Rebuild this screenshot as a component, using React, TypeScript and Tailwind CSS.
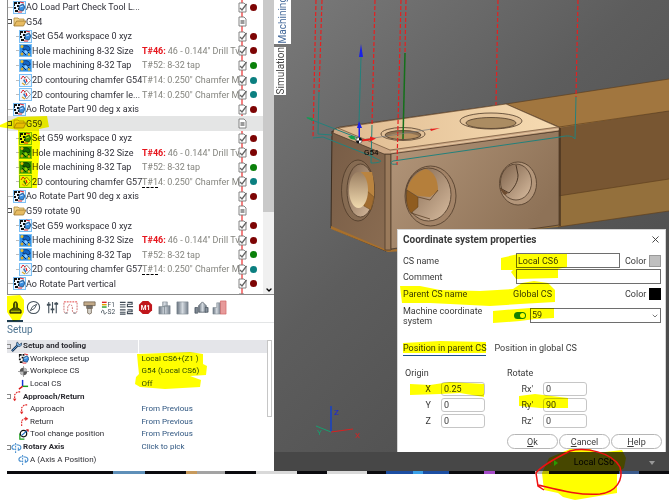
import React, { useState } from 'react';
import { ChevronDown, X } from 'lucide-react';

type IconKind = 'folder' | 'setup' | 'hole' | 'contour';

interface TreeItem {
  kind: IconKind;
  name: string;
  level: 1 | 2;
  dot?: string;
  tool?: string;
  toolText?: string;
  changed?: boolean;
  selected?: boolean;
}

const MAROON = 'bg-[#7d0404]';
const GREEN = 'bg-[#0a800a]';
const TEAL = 'bg-[#0b7f80]';

const TREE: TreeItem[] = [
  { kind: 'setup', name: 'AO Load Part Check Tool L...', level: 1, dot: MAROON },
  { kind: 'folder', name: 'G54', level: 1 },
  { kind: 'setup', name: 'Set G54 workspace 0 xyz', level: 2, dot: MAROON },
  { kind: 'hole', name: 'Hole machining 8-32 Size', level: 2, dot: MAROON, tool: 'T#46:', toolText: '46 - 0.144" Drill Tv' },
  { kind: 'hole', name: 'Hole machining 8-32 Tap', level: 2, dot: GREEN, tool: 'T#52:', toolText: '8-32 tap' },
  { kind: 'contour', name: '2D contouring chamfer G54', level: 2, dot: TEAL, tool: 'T#14:', toolText: '0.250" Chamfer M' },
  { kind: 'contour', name: '2D contouring chamfer le...', level: 2, dot: TEAL, tool: 'T#14:', toolText: '0.250" Chamfer M' },
  { kind: 'setup', name: 'Ao Rotate Part 90 deg x axis', level: 1, dot: MAROON },
  { kind: 'folder', name: 'G59', level: 1, selected: true },
  { kind: 'setup', name: 'Set G59 workspace 0 xyz', level: 2, dot: MAROON },
  { kind: 'hole', name: 'Hole machining 8-32 Size', level: 2, dot: MAROON, tool: 'T#46:', toolText: '46 - 0.144" Drill Tv' },
  { kind: 'hole', name: 'Hole machining 8-32 Tap', level: 2, dot: GREEN, tool: 'T#52:', toolText: '8-32 tap' },
  { kind: 'contour', name: '2D contouring chamfer G57', level: 2, dot: TEAL, tool: 'T#14:', toolText: '0.250" Chamfer M', changed: true },
  { kind: 'setup', name: 'Ao Rotate Part 90 deg x axis', level: 1, dot: MAROON },
  { kind: 'folder', name: 'G59 rotate 90', level: 1 },
  { kind: 'setup', name: 'Set G59 workspace 0 xyz', level: 2, dot: MAROON },
  { kind: 'hole', name: 'Hole machining 8-32 Size', level: 2, dot: MAROON, tool: 'T#46:', toolText: '46 - 0.144" Drill Tv' },
  { kind: 'hole', name: 'Hole machining 8-32 Tap', level: 2, dot: GREEN, tool: 'T#52:', toolText: '8-32 tap' },
  { kind: 'contour', name: '2D contouring chamfer G57', level: 2, dot: TEAL, tool: 'T#14:', toolText: '0.250" Chamfer M', changed: true },
  { kind: 'setup', name: 'Ao Rotate Part vertical', level: 1, dot: MAROON },
];

// Checkered part with a blue block, used for workpiece setup
const SetupGlyph = () => (
  <g>
    <path d="M1 1h3v2H2v2H1zM5 1h2v2H5zM1 6h2v2H1zM4 4h2v2H4zM2 9h3v2H2zM5 7h2v2H5z" fill="#111" />
    <path d="M7 1l4 1M5 11l4 0" stroke="#e3202a" strokeWidth="1" />
    <path d="M6 5l4-2 2 3-2 4-4-1z" fill="#3a8ee0" stroke="#123a66" strokeWidth=".7" />
    <path d="M7 6l3-1" stroke="#bfe2ff" strokeWidth="1" />
  </g>
);

const TreeIcon = ({ kind }: { kind: IconKind }) => {
  if (kind === 'folder') {
    return (
      <svg viewBox="0 0 13 13" className="h-[13px] w-[13px] shrink-0">
        <path d="M1 11V3h4l1 1h5v2" fill="#f3d58a" stroke="#b08a3c" strokeWidth=".8" />
        <path d="M1 11l2.500-5H13l-2.500 5z" fill="#e8bc62" stroke="#a07a30" strokeWidth=".8" />
      </svg>
    );
  }
  return (
    <svg viewBox="0 0 13 13" className="h-[13px] w-[13px] shrink-0">
      <rect x=".5" y=".5" width="12" height="12" fill={kind === 'hole' ? '#2f8fe8' : '#eaf5ff'} stroke="#7cc0f5" />
      {kind === 'setup' && <SetupGlyph />}
      {kind === 'hole' && (
        <g>
          <path d="M4 2c4-1 7 0 7 4l-3 1-1-2-3 1z" fill="#1266c8" stroke="#0a2d66" strokeWidth=".8" />
          <path d="M3 7l4 4M7 6l4 4" stroke="#0a2d66" strokeWidth="1" />
          <path d="M5 8l2-2 2 2-2 2z" fill="#8fd0ff" />
          <circle cx="3" cy="2.500" r="1.500" fill="#e8bd30" />
          <circle cx="3" cy="10" r="1.500" fill="#d2a92c" />
          <circle cx="10" cy="10.500" r="1.300" fill="#e8bd30" />
        </g>
      )}
      {kind === 'contour' && (
        <g fill="none">
          <path d="M7.500 2l4 4.500-4 4.500-3-4.500z" fill="#fff" stroke="#888" strokeWidth=".9" />
          <path d="M2 5l2-3 2 2" stroke="#e3202a" strokeWidth="1" />
          <path d="M5 6l2 3" stroke="#1266c8" strokeWidth="1.200" />
          <path d="M7 5l1 3" stroke="#e3202a" strokeWidth="1.200" />
          <path d="M3 9l3 2" stroke="#e0a21c" strokeWidth="1.200" />
        </g>
      )}
    </svg>
  );
};

const StatusIcon = ({ checked }: { checked: boolean }) => (
  <svg viewBox="0 0 9 11" className="h-[11px] w-[9px] shrink-0">
    <path d="M1 1h5l2 2v7H1z" fill="#fff" stroke="#777" strokeWidth=".9" />
    {checked ? <path d="M2 6l2 2 4.500-6" fill="none" stroke="#666" strokeWidth="1.300" /> : <path d="M2.500 4h4v4h-4z" fill="#999" />}
  </svg>
);

const TreeRow = ({ item }: { item: TreeItem }) => (
  <div className={`flex min-h-0 min-w-0 items-center ${item.selected ? 'bg-[#e4e5e5]' : ''}`}>
    <div className="flex w-[134px] shrink-0 items-center">
      {item.kind === 'folder' ? (
        <button aria-label="Toggle group" className="mr-px h-[5px] w-1 border border-l-0 border-[#555]" />
      ) : (
        <span className={`h-px shrink-0 bg-[#bdbdbd] ${item.level === 2 ? 'ml-2 w-[3px]' : 'w-[5px]'}`} />
      )}
      <TreeIcon kind={item.kind} />
      <span className="whitespace-nowrap text-[#303038]">{item.name}</span>
    </div>
    <div className="flex min-w-0 flex-1 gap-[2px] whitespace-nowrap text-[#85857f]">
      {item.tool && (
        <>
          <span className={item.tool === 'T#46:' ? 'font-bold text-[#e6141c]' : ''}>
            {item.changed ? <span className="border-b border-dashed border-black">T#1</span> : null}
            {item.changed ? '4:' : item.tool}
          </span>
          <span>{item.toolText}</span>
        </>
      )}
    </div>
    <div className="flex w-[25px] shrink-0 items-center gap-[3px]">
      <StatusIcon checked={item.kind !== 'folder'} />
      {item.dot && <span className={`h-[7px] w-[7px] rounded-full ${item.dot}`} />}
    </div>
  </div>
);

const OperationTree = () => (
  <div className="flex h-[295px] overflow-hidden border-b border-l border-[#8b8b8b] bg-white">
    <div className="relative min-w-0 flex-1">
      <div className="absolute bottom-0 right-[20px] top-0 w-[2px] bg-[#f58080]" />
      <div className="relative grid h-[291px] grid-cols-1 grid-rows-[repeat(20,minmax(0,1fr))] text-[9px] leading-[14px]">
        {TREE.map((item, i) => (
          <TreeRow key={i} item={item} />
        ))}
      </div>
      <div className="relative text-[9px] leading-[14px]">
        <TreeRow item={{ kind: 'folder', name: 'G54 part off', level: 1 }} />
      </div>
    </div>
    <div className="flex w-[11px] flex-col items-center bg-[#f0f0f0]">
      <div className="h-[212px] w-full bg-[#c9c9c9]" />
      <ChevronDown className="mt-auto h-2 w-2 text-black" strokeWidth={4} />
    </div>
  </div>
);

const TOOLS: { label: string; art: React.ReactNode }[] = [
  {
    label: 'Setup',
    art: (
      <g>
        <path d="M6 8V4l1-2h2l1 2v4l4 3v3H2v-3z" fill="#4a5560" stroke="#111" strokeWidth=".8" />
        <path d="M8 3v5M3 12h10" stroke="#c9d2da" strokeWidth="1.200" />
      </g>
    ),
  },
  {
    label: 'Parameters',
    art: (
      <g fill="none" stroke="#44505a">
        <circle cx="8" cy="8" r="6.500" strokeWidth="1.100" />
        <path d="M11.500 4.500L9 9l-4.500 2.500L7 7z" />
      </g>
    ),
  },
  {
    label: 'Levels',
    art: (
      <g stroke="#44505a" strokeWidth="1.200">
        <path d="M4 2v12M8 2v12M12 2v12" />
        <path d="M2 5h4M6 10h4M10 4h4" strokeWidth="2" />
      </g>
    ),
  },
  {
    label: 'Strategy',
    art: (
      <g fill="none">
        <path d="M1 2h14" stroke="#e23a3a" strokeDasharray="2 1" />
        <path d="M1 3v8c0 4 4 4 4 0V8c0-4 5-4 5 0v3c0 4 5 4 5 0V3" stroke="#c66" strokeDasharray="2 1" />
        <path d="M2 14h3M11 14h3" stroke="#7b8790" />
      </g>
    ),
  },
  {
    label: 'Tool',
    art: (
      <g stroke="#6b5d4c" strokeWidth=".8">
        <path d="M2 2h12v4H2z" fill="#c2a987" />
        <path d="M5 6h6v3H5z" fill="#777" />
        <path d="M6 9h4v5l-2 1-2-1z" fill="#d8d4cc" />
      </g>
    ),
  },
  {
    label: 'Feeds',
    art: (
      <g fontFamily="Roboto, sans-serif" fontSize="7" fill="#44505a">
        <path d="M1 2.500h5" stroke="#d22" strokeWidth="1.500" />
        <path d="M1 5h5" stroke="#e2a400" strokeWidth="1.500" />
        <path d="M1 7.500h5" stroke="#2a9a2a" strokeWidth="1.500" />
        <path d="M0 14c1-4 3-4 3-1s2 2 3 0" fill="none" stroke="#44505a" />
        <text x="7" y="7">F1</text>
        <text x="7" y="15">S2</text>
      </g>
    ),
  },
  {
    label: 'Lists',
    art: (
      <g stroke="#3f4a55" strokeWidth="1.200" fill="none">
        <path d="M1 2.500h6M1 5h6M1 7.500h6M1 10.500h6M1 13h6M1 15h6" />
        <path d="M9 2.500h5v2H9v2.500h6M9 10.500h5v2H9v2h6" />
      </g>
    ),
  },
  {
    label: 'Stops',
    art: (
      <g>
        <path d="M5 1h6l4 4v6l-4 4H5l-4-4V5z" fill="#c0161c" />
        <text x="8" y="10.500" textAnchor="middle" fontFamily="Roboto, sans-serif" fontWeight="700" fontSize="7" fill="#fff">
          M1
        </text>
      </g>
    ),
  },
  {
    label: 'Stock',
    art: (
      <g fill="url(#metal)" stroke="#7d8791" strokeWidth=".6">
        <path d="M6 2h5v5H6zM2 7h6v8H2zM8 6h6v9H8z" />
      </g>
    ),
  },
  { label: 'Part', art: <path d="M2 2h12v13H2z" fill="url(#metal)" stroke="#7d8791" strokeWidth=".6" /> },
  {
    label: 'Fixture',
    art: (
      <g fill="url(#metal)" stroke="#4c5762" strokeWidth=".8">
        <path d="M5 6l4-4 4 4v7H5z" />
        <path d="M1 8h3v6H1zM12 8h3v5h-3z" />
      </g>
    ),
  },
  {
    label: 'Result',
    art: (
      <g strokeWidth=".6">
        <path d="M1 8h4V3h4v12H1z" fill="url(#metal)" stroke="#7d8791" />
        <path d="M9 1h6v14H9z" fill="#e79a9a" stroke="#c55" />
      </g>
    ),
  },
];

const Toolbar = () => {
  const [active, setActive] = useState('Setup');
  return (
    <div className="flex h-[28px] items-center justify-between border-b border-[#e3e5e6] pr-[46px]">
      {TOOLS.map(t => (
        <button
          key={t.label}
          aria-label={t.label}
          onClick={() => setActive(t.label)}
          className={`flex h-[26px] w-4 items-center justify-center border-b-2 ${active === t.label ? 'border-[#1d3c50]' : 'border-transparent'}`}
        >
          <svg viewBox="0 0 16 16" className="h-[15px] w-[15px]">{t.art}</svg>
        </button>
      ))}
    </div>
  );
};

type PropKind = 'wrench' | 'setup' | 'cs' | 'axes' | 'approach' | 'return' | 'tool' | 'rotary';

const PROPS: { kind: PropKind; name: string; value?: string; group?: boolean; header?: boolean; link?: boolean }[] = [
  { kind: 'wrench', name: 'Setup and tooling', group: true, header: true },
  { kind: 'setup', name: 'Workpiece setup', value: 'Local CS6+(Z1 )' },
  { kind: 'cs', name: 'Workpiece CS', value: 'G54 (Local CS6)' },
  { kind: 'axes', name: 'Local CS', value: 'Off' },
  { kind: 'approach', name: 'Approach/Return', group: true },
  { kind: 'approach', name: 'Approach', value: 'From Previous', link: true },
  { kind: 'return', name: 'Return', value: 'From Previous', link: true },
  { kind: 'tool', name: 'Tool change position', value: 'From Previous', link: true },
  { kind: 'rotary', name: 'Rotary Axis', value: 'Click to pick', group: true, link: true },
  { kind: 'rotary', name: 'A (Axis A Position)' },
];

const PropIcon = ({ kind }: { kind: PropKind }) => (
  <svg viewBox="0 0 12 12" className="h-[11px] w-[11px] shrink-0" fill="none">
    {kind === 'wrench' && (
      <g>
        <path d="M1 11l6-6" stroke="#1d3552" strokeWidth="2.600" />
        <path d="M1.500 10.500l5-5" stroke="#5aa0e0" strokeWidth="1" />
        <path d="M7 1c-2 2-1 5 2 5 2 0 3-2 2.500-4L9.500 4 8 3z" fill="#79b4e8" stroke="#1d3552" strokeWidth=".8" />
      </g>
    )}
    {kind === 'setup' && <SetupGlyph />}
    {kind === 'cs' && (
      <g>
        <circle cx="6" cy="6" r="4" fill="#555" />
        <path d="M6 2a4 4 0 014 4H6zM6 10a4 4 0 01-4-4h4z" fill="#bbb" />
        <path d="M6 0v12M0 6h12" stroke="#777" strokeWidth=".7" />
      </g>
    )}
    {kind === 'axes' && (
      <g strokeWidth="1.600">
        <path d="M5 8V1" stroke="#1432d8" />
        <path d="M5 8h6" stroke="#1a9a1a" />
        <path d="M5 8l-4 3" stroke="#d81414" />
      </g>
    )}
    {kind === 'approach' && (
      <g stroke="#e02020" strokeWidth="1.200">
        <path d="M10 1H7L4 4v6" strokeDasharray="2 1" />
        <path d="M2.500 8.500L4 11l1.500-2.500z" fill="#e02020" strokeWidth=".4" />
      </g>
    )}
    {kind === 'return' && (
      <g stroke="#e02020" strokeWidth="1.200">
        <path d="M4 11V5l3-2h2" strokeDasharray="2 1" />
        <path d="M8 1l3 2-3 2z" fill="#e02020" strokeWidth=".4" />
      </g>
    )}
    {kind === 'tool' && (
      <g strokeWidth="1.300">
        <path d="M2 5v6h5" stroke="#18a018" />
        <circle cx="6" cy="5" r="3.500" stroke="#111" />
        <path d="M4 7l7-6" stroke="#1769c0" />
        <path d="M9 1h2v2" stroke="#e02020" />
      </g>
    )}
    {kind === 'rotary' && (
      <g stroke="#4a90d0" strokeWidth="1.200">
        <path d="M5 1v11" strokeDasharray="2 1" />
        <path d="M4 3C0 4 0 8 4 8M6 3c6 0 6 5 2 6l0-3" />
      </g>
    )}
  </svg>
);

const PropertyPanel = () => (
  <div className="flex min-h-0 flex-1">
    <div className="min-w-0 flex-1">
      <table className="h-[126px] w-full table-fixed border-collapse text-[8px] leading-[12px] text-[#2d2d33]">
        <tbody>
          {PROPS.map(p => (
            <tr key={p.name} className={p.header ? 'bg-[#e4e5e9]' : ''}>
              <td className="w-[131px] border-r border-white p-0">
                <div className={`flex items-center whitespace-nowrap ${p.group ? 'font-bold' : 'pl-[11px]'}`}>
                  {p.group && <button aria-label="Toggle section" className="h-[5px] w-1 shrink-0 border border-l-0 border-[#888]" />}
                  <PropIcon kind={p.kind} />
                  <span className="ml-px">{p.name}</span>
                </div>
              </td>
              <td className="p-0 pl-[3px]">
                {p.link ? <a href="#pick" className="text-[#2f5680]">{p.value}</a> : <span className="text-[#2f4a50]">{p.value}</span>}
              </td>
            </tr>
          ))}
        </tbody>
      </table>
    </div>
    <div className="mr-[2px] h-[77px] w-[5px] border border-[#c6c6c6]" />
  </div>
);

const Hole = ({ cx, cy, rx, ry, fill }: { cx: number; cy: number; rx: number; ry: number; fill: string }) => (
  <ellipse cx={cx} cy={cy} rx={rx} ry={ry} fill={fill} stroke="#4e3a28" strokeWidth=".8" />
);

// Shaded part, raw stock and the tool path, drawn in scene units
const Scene = () => (
  <svg viewBox="274 0 395 471" preserveAspectRatio="xMinYMin slice" className="absolute inset-0 h-full w-full">
    <defs>
      <linearGradient id="metal">
        <stop offset="0" stopColor="#66717d" />
        <stop offset=".5" stopColor="#d4dae0" />
        <stop offset="1" stopColor="#737e8a" />
      </linearGradient>
      <linearGradient id="bg" x1="0" y1="0" x2=".8" y2="1">
        <stop offset="0" stopColor="#7a7a7a" />
        <stop offset=".45" stopColor="#5d5d5d" />
        <stop offset="1" stopColor="#4a4a4a" />
      </linearGradient>
      <linearGradient id="front" x1="0" y1="0" x2="1" y2=".5">
        <stop offset="0" stopColor="#b3967a" />
        <stop offset="1" stopColor="#8e7257" />
      </linearGradient>
      <linearGradient id="side" x1="0" y1="0" x2="1" y2="1">
        <stop offset="0" stopColor="#775c46" />
        <stop offset="1" stopColor="#8a6c51" />
      </linearGradient>
      <linearGradient id="top" x1="0" y1="0" x2="1" y2="0">
        <stop offset="0" stopColor="#e0bc92" />
        <stop offset="1" stopColor="#f6dbb2" />
      </linearGradient>
      <linearGradient id="bore" x1="0" y1="0" x2="1" y2="1">
        <stop offset="0" stopColor="#7d624b" />
        <stop offset="1" stopColor="#d9bda0" />
      </linearGradient>
      <linearGradient id="cream" x1="0" y1="0" x2="0" y2="1">
        <stop offset="0" stopColor="#9c8063" />
        <stop offset="1" stopColor="#f0d9ae" />
      </linearGradient>
    </defs>
    <rect x="274" width="395" height="471" fill="url(#bg)" />

    <path d="M506 104L669 79V111L560 128z" fill="#a1763f" />
    <path d="M559 128L669 111V180L558 196z" fill="#785632" />
    <path d="M558 196L669 179V211L558 227L528 230z" fill="#94703c" />
    <path d="M506 104L669 79M559 127L669 111M558 196L669 179M558 227L669 211" stroke="#60411e" strokeWidth=".7" />

    <path d="M332 131L386 153V251L331 228z" fill="url(#side)" stroke="#3c2c1e" />
    <path d="M331 226L387 250L420 247V250L388 252L331 229z" fill="#a8702c" />
    <path d="M385 154h6V250h-6z" fill="#9a7a5b" stroke="#4e3a28" strokeWidth=".8" />
    <path d="M391 153L559 131V225L391 249z" fill="url(#front)" stroke="#4e3a28" strokeWidth=".8" />
    <path d="M334 129L340 127L506 104L559 127V131L390 154L384 154L333 133z" fill="#cda885" stroke="#4e3a28" strokeWidth=".8" />
    <path d="M338 128L506 104L558 127L390 150z" fill="url(#top)" stroke="#6b4f34" strokeWidth=".7" />
    <path d="M391 152L559 129" stroke="#ead0ac" strokeWidth=".8" />
    <path d="M560 128V226" stroke="#4a3421" strokeWidth="1.500" />

    <Hole cx={358} cy={190.500} rx={16.500} ry={30.500} fill="#866b52" />
    <Hole cx={360.500} cy={190.500} rx={13.500} ry={26.500} fill="url(#bore)" />
    <path d="M361 172H372C375 183 375 200 372 206H361z" fill="#ba8440" />
    <path d="M366 190L374 197L371 210L364 206z" fill="#a06c30" stroke="#6b4a22" strokeWidth=".5" />
    <ellipse cx="358.500" cy="190" rx="9.500" ry="18" fill="url(#cream)" />

    <Hole cx={430.500} cy={196} rx={25.500} ry={30} fill="#a38468" />
    <Hole cx={428.500} cy={194.500} rx={22.500} ry={26.500} fill="url(#bore)" />
    <path d="M426 169C434 172 438 179 438 191L430 197L418 196L407 190C409 180 417 171 426 169z" fill="#b57f3b" />
    <path d="M407 190L418 197V207L411 213C406 207 406 198 407 190z" fill="#8f5c20" stroke="#5d3e1a" strokeWidth=".5" />
    <path d="M418 197L430 200L438 190M411 213L430 219" fill="none" stroke="#5d4128" strokeWidth=".8" />

    <Hole cx={518} cy={183.500} rx={18.500} ry={21.500} fill="#b3967a" />
    <Hole cx={516} cy={182} rx={15.500} ry={18} fill="url(#bore)" />
    <path d="M500 188L509 193C514 188 518 182 518 175L516 165" fill="none" stroke="#4e3a28" />
    <path d="M500 188L508 193L505 195C503 194 501 191 500 188z" fill="#6d4c30" />

    <Hole cx={403} cy={134} rx={22} ry={6.500} fill="#e2c199" />
    <Hole cx={403} cy={135} rx={18} ry={4.500} fill="#8f7354" />
    <path d="M387 136C396 132 410 132 419 136C412 140 393 140 387 136z" fill="#b89161" />
    <Hole cx={491} cy={121} rx={31} ry={8} fill="#e4c49b" />
    <Hole cx={491} cy={123} rx={25} ry={5.500} fill="#ab8c62" />

    <g fill="none" stroke="#e52020" strokeWidth="1.200" strokeDasharray="4 2">
      <path d="M316 0L313 138M322 0L319 92M375 0L372 125M401 0L397 165M498 0L496 105M578 0L576 97M406 0L405 53" />
    </g>
    <g fill="none" stroke="#23817c" strokeWidth="1">
      <path d="M319 92L318 134L332 135M313 138L323 137L371 156M372 125L371 163C380 163 383 161 379 160L371 156" />
      <path d="M397 164C391 165 389 163 393 161L560 137C568 135 573 136 575 139L576 97M307 118L358 138" />
      <path d="M361 57L359 122" />
    </g>
    <path d="M405 53L403 139" stroke="#14701a" strokeWidth="1.500" />
    <path d="M361 44L359 57h4zM359 121l-2 7h1.500v11h1.500v-11h2z" fill="#1820e8" />
    <path d="M361 140L432 129" stroke="#777" strokeWidth=".7" />
    <path d="M361 139.500l9-1v-2l6 2-6 3v-1l-9 1zM430 129l10-1-9 3z" fill="#e8201c" />
    <path d="M306 117l7 1-1 3zM348 136l6 0 2 4-5-1z" fill="#14a04a" />
    <circle cx="359" cy="140.500" r="3" fill="#fff" stroke="#111" strokeWidth=".5" />
    <path d="M359 137.500a3 3 0 013 3h-3zM359 143.500a3 3 0 01-3-3h3z" fill="#111" />

    <path d="M331 432V406" stroke="#1540c8" strokeWidth="1.500" />
    <path d="M331 432L353 429" stroke="#d82020" />
    <path d="M331 432L316 426" stroke="#16a070" />
    <g fontFamily="Roboto, sans-serif" fontSize="8">
      <text x="364" y="155" fill="#000">G54</text>
      <text x="334" y="415" fill="#1522e0">Z</text>
      <text x="355" y="438" fill="#d82020">X</text>
      <text x="317" y="435" fill="#16a070">Y</text>
    </g>
  </svg>
);

const AxisField = ({ label, value }: { label: string; value: string }) => (
  <label className="flex items-center gap-2">
    <span className="w-4 pr-[2px] text-right">{label}</span>
    <input defaultValue={value} className="h-[14px] w-11 rounded-[3px] border border-[#c6c6c6] bg-white px-[2px] outline-none" />
  </label>
);

const CoordinateDialog = () => {
  const [tab, setTab] = useState('parent');
  const tabClass = (id: string) => `border-b leading-[13px] ${tab === id ? 'border-[#1b4e8f]' : 'border-transparent'}`;
  return (
    <section className="absolute right-[3px] top-[229px] w-[269px] border border-[#d6d6d6] bg-white pb-[5px] pl-[5px] pr-[3px] text-[9px] leading-[10px] text-[#3a3a3a]">
      <header className="flex h-[19px] items-center justify-between">
        <h2 className="text-[10px] font-bold">Coordinate system properties</h2>
        <button aria-label="Close" className="pr-px">
          <X className="h-[11px] w-[11px]" strokeWidth={2} />
        </button>
      </header>

      <div className="grid grid-cols-[110px_minmax(0,1fr)] items-center pt-1">
        <label htmlFor="cs-name">CS name</label>
        <div className="flex items-center gap-[3px] pl-[3px]">
          <input id="cs-name" defaultValue="Local CS6" className="h-[15px] w-[104px] border border-[#6e6e6e] px-px outline-none" />
          <span className="ml-[2px]">Color</span>
          <button aria-label="Name color" className="h-3 w-3 border border-[#999] bg-[#bfbfbf]" />
        </div>
        <label htmlFor="cs-comment" className="pt-px">Comment</label>
        <div className="pl-[3px] pr-px pt-px">
          <input id="cs-comment" className="block h-[15px] w-full border border-[#6e6e6e] px-px outline-none" />
        </div>
        <span>Parent CS name</span>
        <div className="flex h-5 items-center gap-[3px]">
          <span className="w-[109px]">Global CS</span>
          <span>Color</span>
          <button aria-label="Parent color" className="h-3 w-3 bg-black" />
        </div>
        <label htmlFor="cs-machine" className="pr-6 pt-[2px]">Machine coordinate system</label>
        <div className="flex items-center gap-1 pr-px">
          <label className="relative ml-px flex h-[7px] w-3 shrink-0 items-center justify-end rounded-full bg-[#15803d] px-px">
            <input type="checkbox" defaultChecked aria-label="Use machine coordinate system" className="absolute inset-0 opacity-0" />
            <span className="h-[5px] w-[5px] rounded-full bg-white" />
          </label>
          <div className="relative flex-1">
            <select id="cs-machine" defaultValue="59" className="h-[15px] w-full appearance-none border border-[#6e6e6e] bg-white px-px outline-none">
              <option>59</option>
            </select>
            <ChevronDown className="pointer-events-none absolute right-[2px] top-1 h-2 w-2" />
          </div>
        </div>
      </div>

      <div className="mt-4 flex gap-2">
        <button className={tabClass('parent')} onClick={() => setTab('parent')}>Position in parent CS</button>
        <button className={tabClass('global')} onClick={() => setTab('global')}>Position in global CS</button>
      </div>

      <div className="mt-3 flex gap-[22px] pl-[2px]">
        <fieldset>
          <legend className="mb-1">Origin</legend>
          <div className="flex flex-col gap-[2px] pl-[12px]">
            <AxisField label="X" value="0.25" />
            <AxisField label="Y" value="0" />
            <AxisField label="Z" value="0" />
          </div>
        </fieldset>
        <fieldset>
          <legend className="mb-1">Rotate</legend>
          <div className="flex flex-col gap-[2px] pl-[12px]">
            <AxisField label="Rx'" value="0" />
            <AxisField label="Ry'" value="90" />
            <AxisField label="Rz'" value="0" />
          </div>
        </fieldset>
      </div>

      <footer className="mt-[6px] flex justify-end gap-px">
        <button className="h-[15px] w-[51px] rounded-full border border-[#b5b5b5]"><u>O</u>k</button>
        <button className="h-[15px] w-[51px] rounded-full border border-[#b5b5b5]"><u>C</u>ancel</button>
        <button className="h-[15px] w-[51px] rounded-full border border-[#b5b5b5]"><u>H</u>elp</button>
      </footer>
    </section>
  );
};

// Marker strokes drawn over the window
const Markup = () => (
  <>
    <svg viewBox="0 0 669 500" className="pointer-events-none absolute left-0 top-0 w-full mix-blend-multiply" fill="#ffff00">
      <path d="M0 125L18 117L47 116L49 127L39 129L40 143L37 188H19L18 130L0 127z" />
      <path d="M7 296L20 295L24 300V312L20 320L13 321L7 312z" />
      <path d="M137 354L190 352L203 354L203 364L207 366L206 375L190 376L201 380L200 387L165 389L140 387L135 384L136 377L139 374L138 365z" />
      <path d="M501 258L518 254H567V267L558 269V278L516 279L511 272L513 270H501z" />
      <path d="M400 286L420 286L440 290L480 291L513 289L522 283L534 281L548 283L555 290V302L520 304L490 306L430 303L402 303z" />
      <path d="M493 311L530 308L554 308V318L535 319L520 321L493 323z" />
      <path d="M403 343L440 341L486 342V353H403z" />
      <path d="M410 384L430 385L450 382L484 384V397L460 393L440 394L410 395z" />
      <path d="M519 396L535 394L568 398V408L540 408L519 406z" />
      <path d="M549 458L570 449L590 449L597 453L622 450L626 458L624 468L617 473V493L593 497L575 500L563 497L558 493L544 490L542 473z" />
    </svg>
    <svg viewBox="0 0 669 500" className="pointer-events-none absolute left-0 top-0 w-full" fill="none">
      <path
        d="M544 490L538 486L536 473C541 466 556 458 570 451C585 447 612 452 620 467C624 480 616 492 600 494C580 496 555 489 538 485"
        stroke="#f01010"
        strokeWidth="1.500"
      />
    </svg>
  </>
);

const App: React.FC = () => (
  <div className="relative min-h-screen overflow-hidden bg-white font-[Roboto,sans-serif]">
    <div className="flex pl-[7px]">
      <aside className="flex w-[267px] shrink-0 flex-col bg-white">
        <OperationTree />
        <Toolbar />
        <h3 className="h-[17px] text-[10px] leading-[13px] text-[#4d7390]">Setup</h3>
        <PropertyPanel />
      </aside>
      <main className="relative flex h-[471px] min-w-0 flex-1 flex-col overflow-hidden bg-[#474747]">
        <Scene />
        <nav className="relative flex w-[17px] flex-col text-[10px] leading-[15px]">
          <button className="flex h-[44px] items-center justify-start bg-white pb-px text-[#44699a] [writing-mode:sideways-lr]">Machining</button>
          <button className="mt-[3px] flex h-[48px] w-3 items-center justify-center bg-white text-[#4a4a4a] [writing-mode:sideways-lr]">Simulation</button>
        </nav>
        <CoordinateDialog />
        <div className="relative mt-auto flex h-[19px] items-center justify-end bg-[#474747] pr-[14px] pt-[3px] text-[9px] text-black">
          <svg viewBox="0 0 14 8" className="mr-[14px] h-2 w-[14px]">
            <path d="M1 5l4-2M2 2l3 4" stroke="#8a1a1a" />
            <path d="M8 1l4 3-4 3z" fill="#2a9a20" />
          </svg>
          <span className="mr-[35px]">Local CS6</span>
          <svg viewBox="0 0 6 4" className="h-1 w-[6px]"><path d="M0 0h6L3 4z" fill="#999" /></svg>
        </div>
      </main>
    </div>
    <div className="ml-[7px] flex h-[3px] bg-[#0b0b0f]">
      <span className="ml-[106px] w-[32px] bg-[#5e8fb8]" />
      <span className="ml-[41px] w-[11px] bg-[#c79a5c]" />
      <span className="w-[28px] bg-[#a3a3a3]" />
      <span className="ml-[31px] w-[41px] bg-[#d9d9d9]" />
      <span className="ml-[30px] w-[40px] bg-[#d9d9d9]" />
      <span className="ml-[19px] w-[27px] bg-[#1c4ea2]" />
      <span className="w-[10px] bg-[#3aa0e8]" />
      <span className="w-[26px] bg-[#1c4ea2]" />
      <span className="ml-[35px] w-[11px] bg-[#a44ac8]" />
      <span className="ml-[40px] w-[14px] bg-[#b5b5b5]" />
      <span className="ml-[70px] w-[20px] bg-[#3a5a8c]" />
    </div>
    <Markup />
  </div>
);

export default App;
